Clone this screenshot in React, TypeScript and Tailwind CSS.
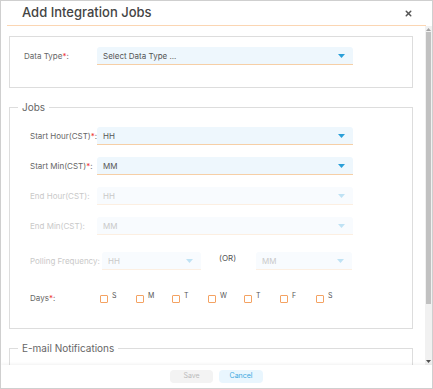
import { X } from "lucide-react";

const font = { fontFamily: "Inter, 'Open Sans', sans-serif" };

const Caret = ({ disabled }: { disabled?: boolean }) => (
  <svg width="7" height="4" viewBox="0 0 7 4">
    <polygon points="0,0 7,0 3.5,4" fill={disabled ? "#bfe2f4" : "#2a9fd8"} />
  </svg>
);

const Select = ({
  value,
  disabled,
  className = "w-[256px]",
}: {
  value: string;
  disabled?: boolean;
  className?: string;
}) => (
  <div
    className={
      "flex h-[18px] shrink-0 items-center justify-between rounded-t-[3px] border-b pl-[6px] pr-[8px] text-[8px] leading-none " +
      (disabled
        ? "border-[#fcefe2] bg-[#f8fbfe] text-[#c9c9c9] "
        : "border-[#f6cfa6] bg-[#eef7fd] text-[#555] ") +
      className
    }
  >
    <span>{value}</span>
    <Caret disabled={disabled} />
  </div>
);

const Label = ({
  text,
  required,
  disabled,
}: {
  text: string;
  required?: boolean;
  disabled?: boolean;
}) => (
  <span
    className={
      "whitespace-nowrap text-[8px] leading-none " +
      (disabled ? "text-[#c9c9c9]" : "text-[#666]")
    }
  >
    {text}
    {required && <span className="text-[#e33]">*</span>}:
  </span>
);

const days = ["S", "M", "T", "W", "T", "F", "S"];

export default function App() {
  return (
    <div
      style={font}
      className="flex h-[389px] w-[433px] flex-col overflow-hidden border border-[#cfcfcf] bg-white"
    >
      {/* header */}
      <div className="mx-[6px] flex h-[25px] shrink-0 items-center justify-between border-b border-[#fbd6b3] pl-[15px] pr-[13px]">
        <span className="text-[13px] font-medium text-[#444]">Add Integration Jobs</span>
        <X className="h-[9px] w-[9px] text-[#555]" strokeWidth={4} />
      </div>

      {/* body */}
      <div className="flex min-h-0 flex-1">
        <div className="flex-1 overflow-hidden pl-[8px] pr-[12px] pt-[10px]">
          <fieldset className="h-[52px] border border-[#ddd] pl-[14px] pt-[10px] text-[8px] leading-none">
            <div className="flex items-center">
              <div className="w-[73px] shrink-0">
                <Label text="Data Type" required />
              </div>
              <Select value="Select Data Type ..." />
            </div>
          </fieldset>

          <fieldset className="mt-[12px] h-[229px] border border-[#ddd]">
            <legend className="ml-[8px] px-[4px] text-[10px] text-[#666]">Jobs</legend>
            <div className="mt-[12px] flex flex-col gap-[12px] pl-[20px] text-[8px] leading-none">
              <div className="flex items-center">
                <div className="w-[67px] shrink-0">
                  <Label text="Start Hour(CST)" required />
                </div>
                <Select value="HH" />
              </div>
              <div className="flex items-center">
                <div className="w-[67px] shrink-0">
                  <Label text="Start Min(CST)" required />
                </div>
                <Select value="MM" />
              </div>
              <div className="flex items-center">
                <div className="w-[67px] shrink-0">
                  <Label text="End Hour(CST)" disabled />
                </div>
                <Select value="HH" disabled />
              </div>
              <div className="flex items-center">
                <div className="w-[67px] shrink-0">
                  <Label text="End Min(CST)" disabled />
                </div>
                <Select value="MM" disabled />
              </div>
              <div className="mt-[5px] flex items-center">
                <div className="w-[72px] shrink-0">
                  <Label text="Polling Frequency" disabled />
                </div>
                <Select value="HH" disabled className="w-[99px]" />
                <span className="-mt-[6px] ml-[18px] mr-[20px] text-[8px] leading-none text-[#555]">(OR)</span>
                <Select value="MM" disabled className="w-[96px]" />
              </div>
              <div className="mt-[10px] flex items-center">
                <div className="w-[70px] shrink-0">
                  <Label text="Days" required />
                </div>
                <div className="flex">
                  {days.map((d, i) => (
                    <div key={i} className="flex w-[36px] items-start gap-[4px]">
                      <span className="mt-[3px] h-[8px] w-[8px] rounded-[1px] border border-[#f4a262]" />
                      <span className="text-[7px] leading-none text-[#555]">{d}</span>
                    </div>
                  ))}
                </div>
              </div>
            </div>
          </fieldset>

          <fieldset className="mt-[12px] h-[60px] border border-[#ddd]">
            <legend className="ml-[8px] px-[4px] text-[10px] text-[#666]">E-mail Notifications</legend>
          </fieldset>
        </div>

        {/* scrollbar */}
        <div className="flex w-[7px] shrink-0 flex-col bg-[#f1f1f1]">
          <div className="flex h-[6px] items-center justify-center">
            <svg width="5" height="3" viewBox="0 0 5 3">
              <polygon points="0,3 5,3 2.5,0" fill="#a3a3a3" />
            </svg>
          </div>
          <div className="mx-[1px] h-[272px] bg-[#c1c1c1]" />
          <div className="flex-1" />
          <div className="flex h-[8px] items-center justify-center">
            <svg width="5" height="3" viewBox="0 0 5 3">
              <polygon points="0,0 5,0 2.5,3" fill="#505050" />
            </svg>
          </div>
        </div>
      </div>

      {/* footer */}
      <div className="flex h-[23px] shrink-0 items-center justify-center gap-[6px] shadow-[0_-1px_3px_rgba(0,0,0,0.06)]">
        <button className="h-[13px] w-[43px] rounded-[4px] bg-[#f3f3f3] text-[7px] text-[#bbb]">Save</button>
        <button className="h-[13px] w-[44px] rounded-[4px] bg-[#e9f6fe] text-[7px] text-[#3aa8e0]">Cancel</button>
      </div>
    </div>
  );
}
